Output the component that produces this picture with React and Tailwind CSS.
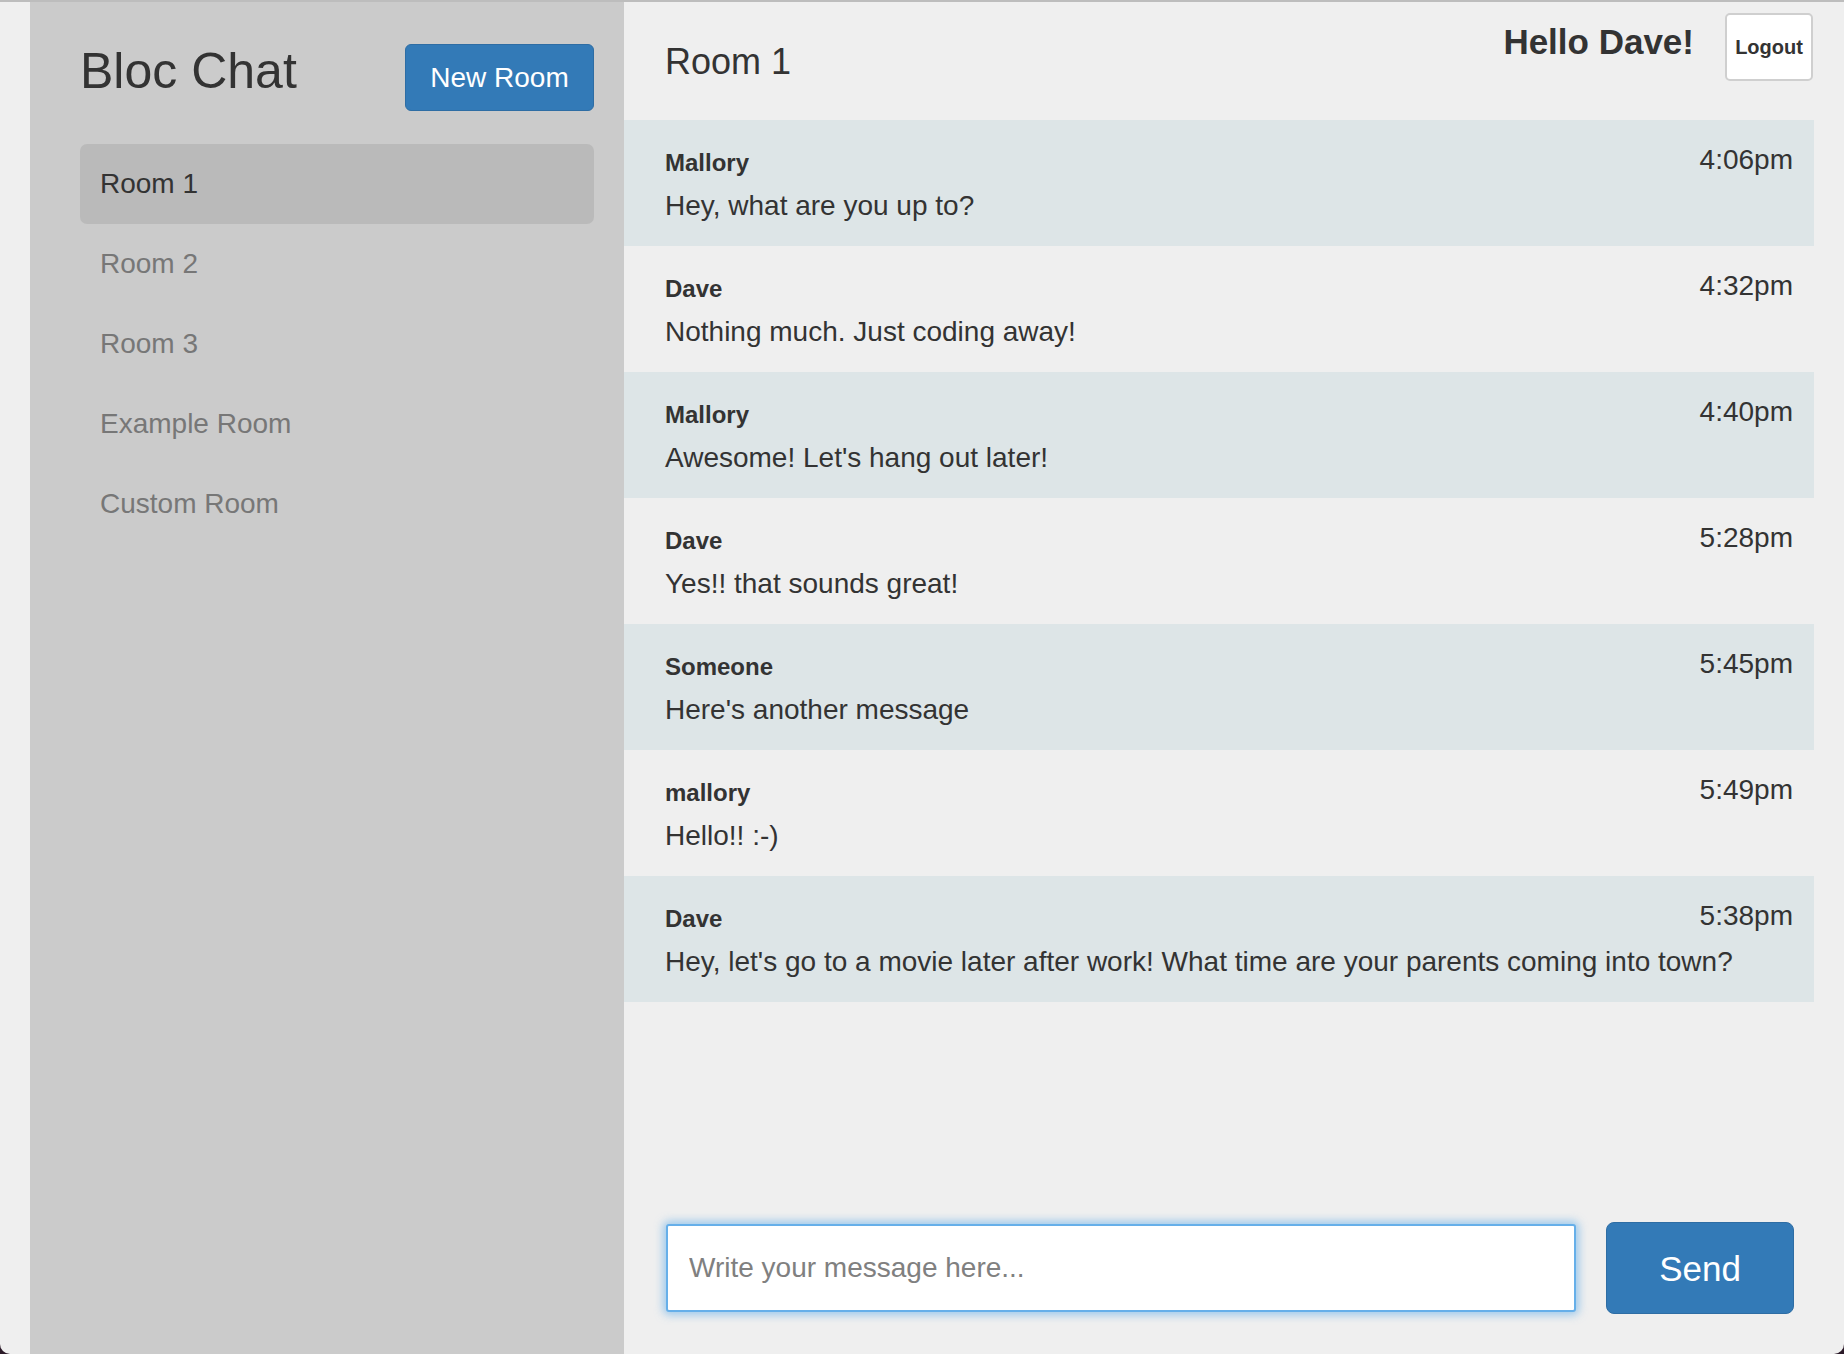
import { useState } from "react";

const rooms = ["Room 1", "Room 2", "Room 3", "Example Room", "Custom Room"];

const messages = [
    { user: "Mallory", time: "4:06pm", text: "Hey, what are you up to?" },
    { user: "Dave", time: "4:32pm", text: "Nothing much. Just coding away!" },
    { user: "Mallory", time: "4:40pm", text: "Awesome! Let's hang out later!" },
    { user: "Dave", time: "5:28pm", text: "Yes!! that sounds great!" },
    { user: "Someone", time: "5:45pm", text: "Here's another message" },
    { user: "mallory", time: "5:49pm", text: "Hello!! :-)" },
    { user: "Dave", time: "5:38pm", text: "Hey, let's go to a movie later after work! What time are your parents coming into town?" },
];

function Sidebar({ active, onSelect }) {
    return (
        <div className="w-[594px] shrink-0 bg-[#cbcbcb] pl-[50px] pr-[30px]">
            {/* header: title + new room */}
            <div className="flex items-start justify-between pt-[42px]">
                <h1 className="mt-[2px] text-[50px] leading-none text-[#333]">Bloc Chat</h1>
                <button className="h-[67px] w-[189px] rounded-[6px] border border-[#2e6da4] bg-[#337ab7] text-[28px] leading-none text-white">
                    New Room
                </button>
            </div>

            <ul className="mt-[33px]">
                {rooms.map((room) => (
                    <li
                        key={room}
                        onClick={() => onSelect(room)}
                        className={`flex h-[80px] cursor-pointer items-center rounded-[7px] pl-[20px] text-[28px] leading-none ${
                            room === active ? "bg-[#bababa] text-[#333]" : "text-[#777]"
                        }`}
                    >
                        {room}
                    </li>
                ))}
            </ul>
        </div>
    );
}

function Message({ msg, shaded }) {
    return (
        <div className={`h-[126px] pl-[41px] pr-[21px] pt-[26px] text-[#333] ${shaded ? "bg-[#dde5e7]" : ""}`}>
            <div className="flex items-start justify-between">
                <span className="mt-[5px] text-[24px] font-bold leading-none">{msg.user}</span>
                <span className="text-[28px] leading-none">{msg.time}</span>
            </div>
            <p className="mt-[17px] text-[28px] leading-none">{msg.text}</p>
        </div>
    );
}

export default function App() {
    const [active, setActive] = useState("Room 1");
    const [draft, setDraft] = useState("");

    return (
        <div className="bg-[#2b1a28]" style={{ fontFamily: '"Liberation Sans", Arial, sans-serif' }}>
            <div className="overflow-hidden rounded-b-[10px] bg-[#efefef]">
                <div className="h-[2px] bg-[#bdbdbd]" />
                <div className="flex h-[1352px] px-[30px]">
                    <Sidebar active={active} onSelect={setActive} />

                    <div className="flex flex-1 flex-col">
                        {/* top bar */}
                        <div className="flex h-[118px] items-start justify-between pl-[41px] pr-[1px]">
                            <h2 className="mt-[42px] text-[36px] leading-none text-[#333]">{active}</h2>
                            <div className="flex items-start gap-[31px] pt-[11px]">
                                <h3 className="mt-[11px] text-[35px] font-bold leading-none text-[#333]">Hello Dave!</h3>
                                <button className="flex h-[68px] w-[88px] items-center justify-center rounded-[5px] border-2 border-[#cfcfcf] bg-white text-[20px] font-semibold leading-none text-[#333]">
                                    Logout
                                </button>
                            </div>
                        </div>

                        {/* messages */}
                        <div>
                            {messages.map((m, i) => (
                                <Message key={i} msg={m} shaded={i % 2 === 0} />
                            ))}
                        </div>

                        {/* composer */}
                        <div className="mt-auto flex items-center gap-[30px] pb-[40px] pl-[42px] pr-[20px]">
                            <input
                                autoFocus
                                value={draft}
                                onChange={(e) => setDraft(e.target.value)}
                                placeholder="Write your message here..."
                                className="h-[88px] flex-1 rounded-[3px] border-2 border-[#66afe9] bg-white pl-[21px] text-[28px] text-[#333] shadow-[0_0_8px_3px_rgba(102,175,233,0.6)] outline-none placeholder:text-[#808080]"
                            />
                            <button className="h-[92px] w-[188px] rounded-[8px] border border-[#2e6da4] bg-[#337ab7] text-[35px] leading-none text-white">
                                Send
                            </button>
                        </div>
                    </div>
                </div>
            </div>
        </div>
    );
}
